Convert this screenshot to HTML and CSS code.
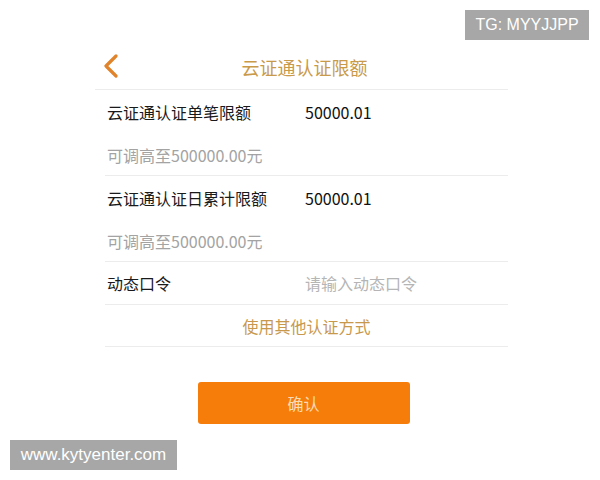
FILE: index.html
```html
<!DOCTYPE html>
<html lang="zh">
<head>
<meta charset="utf-8">
<link rel="stylesheet" href="styles.css">
</head>
<body>
<div class="page">
  <div class="panel">
    <div class="header">
      <svg class="back" width="16" height="24" viewBox="0 0 16 24"><polyline points="13,2 3,12 13,22" fill="none" stroke="#e0832b" stroke-width="3.2" stroke-linecap="round" stroke-linejoin="round"/></svg>
      <div class="title">云证通认证限额</div>
    </div>
    <div class="list">
      <div class="row">
        <div class="line"><span class="label">云证通认证单笔限额</span><span class="value">50000.01</span></div>
        <div class="hint">可调高至500000.00元</div>
      </div>
      <div class="row">
        <div class="line"><span class="label">云证通认证日累计限额</span><span class="value">50000.01</span></div>
        <div class="hint">可调高至500000.00元</div>
      </div>
      <div class="row">
        <div class="line short"><span class="label">动态口令</span><span class="placeholder">请输入动态口令</span></div>
      </div>
      <div class="row other">使用其他认证方式</div>
    </div>
    <div class="actions">
      <button class="confirm">确认</button>
    </div>
  </div>
  <div class="badge tg">TG: MYYJJPP</div>
  <div class="badge site">www.kytyenter.com</div>
</div>
</body>
</html>
```
FILE: styles.css
```css
html, body {
  margin: 0;
  padding: 0;
  background: #ffffff;
}
body {
  font-family: "Noto Sans CJK SC", "Noto Sans", sans-serif;
}
.page {
  position: relative;
  width: 600px;
  height: 480px;
  overflow: hidden;
}
.panel {
  width: 413px;
  margin-left: 95px;
  padding-top: 44px;
}
.header {
  position: relative;
  height: 45px;
  border-bottom: 1px solid #ececec;
  display: flex;
  align-items: center;
  justify-content: center;
}
.back {
  position: absolute;
  left: 8px;
  top: 10px;
}
.title {
  font-size: 18px;
  color: #c99a4a;
  margin-left: 6px;
}
.list {
  margin-left: 10px;
}
.row {
  border-bottom: 1px solid #ececec;
  padding-left: 2px;
}
.line {
  height: 44px;
  display: flex;
  align-items: center;
  font-size: 16px;
  color: #1a1a1a;
}
.line.short {
  height: 42px;
}
.label {
  width: 198px;
  flex: none;
}
.value {
  color: #111111;
}
.placeholder {
  color: #b5b5b5;
}
.hint {
  height: 41px;
  line-height: 43px;
  font-size: 16px;
  color: #a3a3a3;
}
.row.other {
  height: 41px;
  display: flex;
  align-items: center;
  justify-content: center;
  font-size: 16px;
  color: #c8984c;
  padding-left: 0;
}
.actions {
  display: flex;
  justify-content: center;
  padding-top: 35px;
  margin-left: 4px;
}
.confirm {
  width: 212px;
  height: 42px;
  border: none;
  border-radius: 3px;
  background: #f77d0b;
  color: #f7dcb4;
  font-family: "Noto Sans CJK SC", sans-serif;
  font-size: 16px;
}
.badge {
  position: absolute;
  background: #a7a7a7;
  color: #ffffff;
  font-family: "Liberation Sans", Arial, sans-serif;
  font-size: 16px;
  height: 30px;
  line-height: 30px;
  text-align: center;
}
.tg {
  left: 465px;
  top: 10px;
  width: 124px;
}
.site {
  left: 10px;
  top: 440px;
  width: 167px;
  font-size: 17px;
}
```
